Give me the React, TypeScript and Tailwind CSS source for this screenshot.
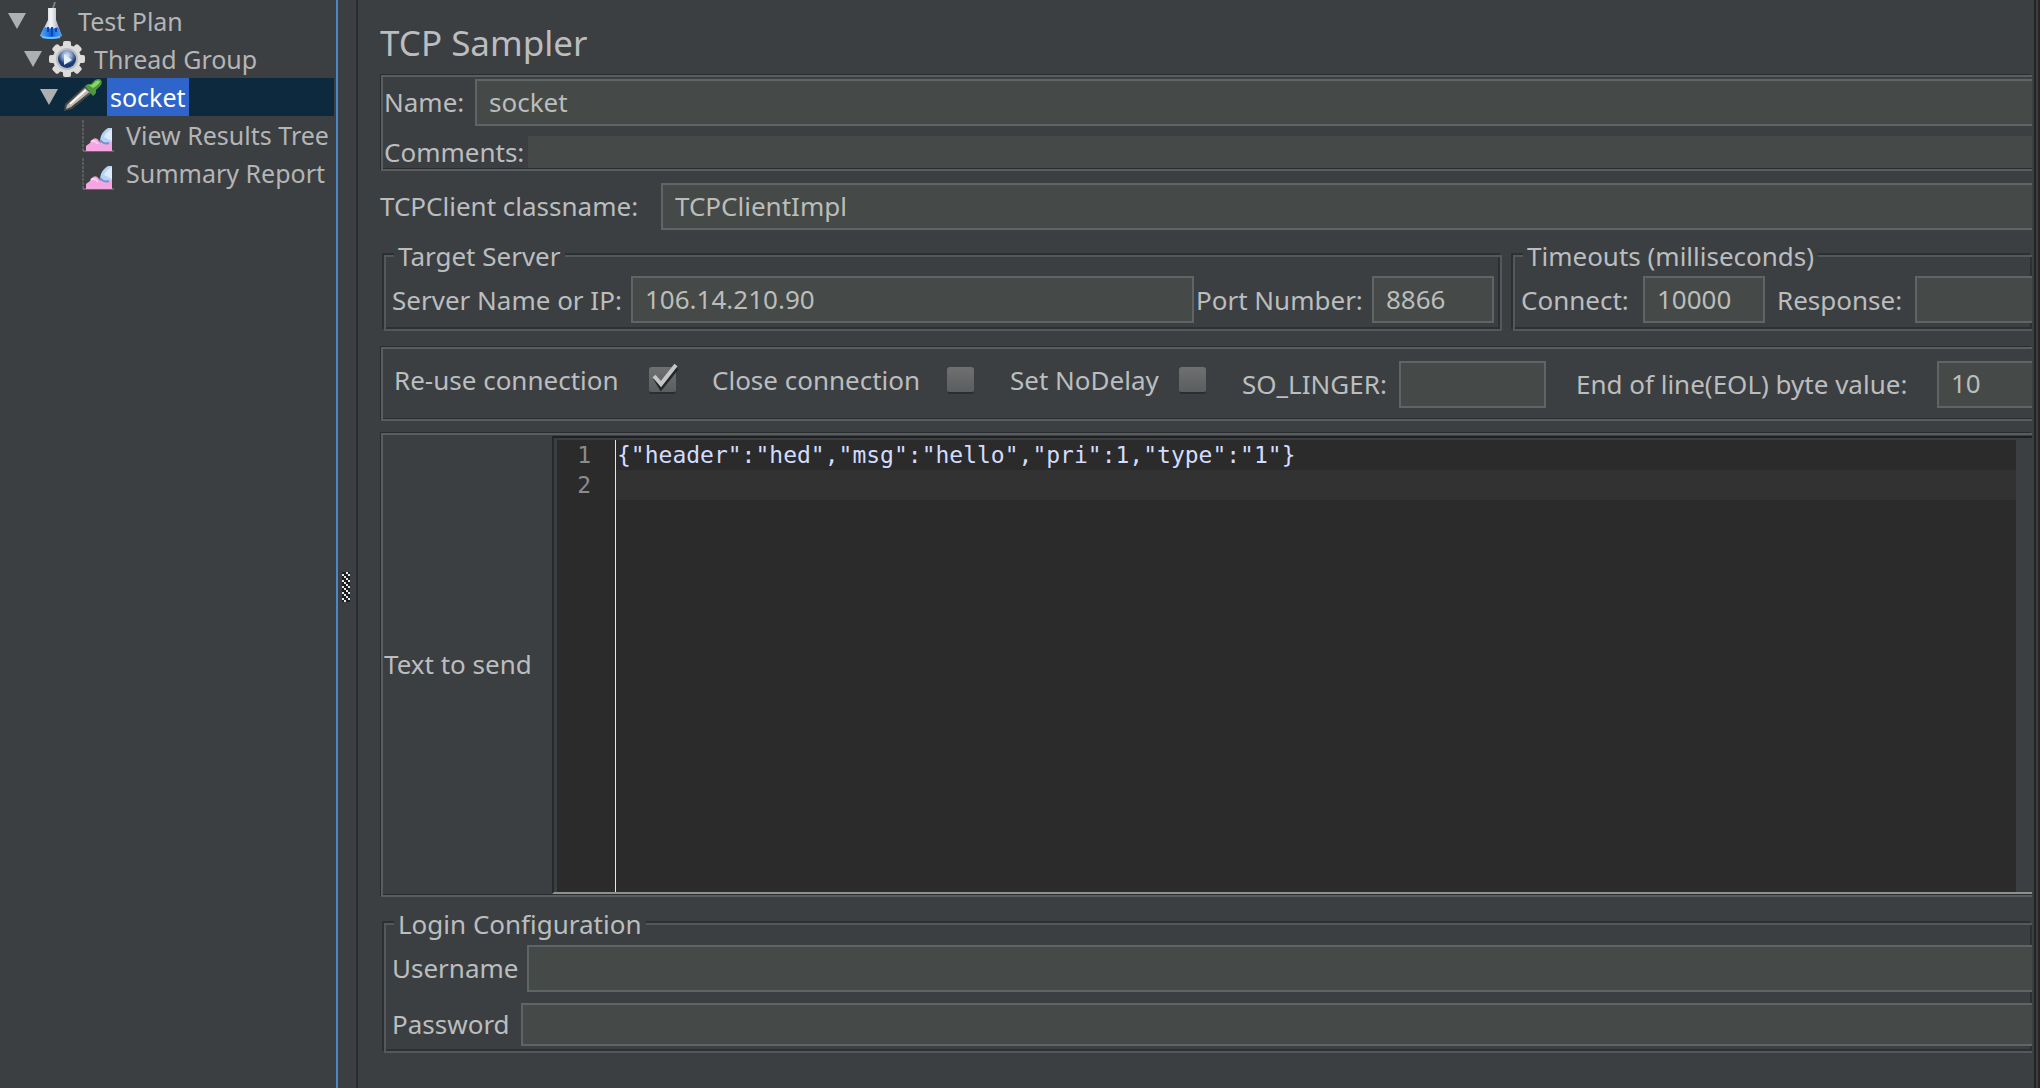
import React, { useState } from 'react';

interface TreeNode {
    label: string;
    icon: React.ReactNode;
    indent: string;
    expandable: boolean;
}

const FlaskIcon = () => (
    <svg width="40" height="38" viewBox="0 0 40 38">
        <defs>
            <linearGradient id="glass" x1="0" x2="1">
                <stop offset="0" stopColor="#9aa5ad" />
                <stop offset="0.5" stopColor="#f4f6f8" />
                <stop offset="1" stopColor="#8d979e" />
            </linearGradient>
            <linearGradient id="liquid" x1="0" x2="1">
                <stop offset="0" stopColor="#55b1ff" />
                <stop offset="0.5" stopColor="#1460d8" />
                <stop offset="1" stopColor="#4aa6f8" />
            </linearGradient>
        </defs>
        <path d="M22 6L24 0" stroke="#7c7f80" strokeWidth="2" />
        <path d="M17 6h8v12l6 16q-11 4-22 0l8-16z" fill="url(#glass)" />
        <path d="M13 25q8 3 14 0l4 9q-11 5-22 0z" fill="url(#liquid)" />
        <path d="M17 25v5M21 25v9M25 26v4" stroke="#0c46b4" strokeWidth="2" />
        <path d="M11 35q9 2 18 0" stroke="#6cc4ff" strokeWidth="2" fill="none" />
    </svg>
);

const GearIcon = () => (
    <svg width="40" height="38" viewBox="0 0 40 38">
        <defs>
            <radialGradient id="hub" cy="0.3">
                <stop offset="0" stopColor="#dfe5ee" />
                <stop offset="0.5" stopColor="#8ba6cf" />
                <stop offset="1" stopColor="#1b3a75" />
            </radialGradient>
        </defs>
        <g fill="#dcdcda">
            {[0, 45, 90, 135].map((angle) => (
                <rect key={angle} x="16" y="1" width="8" height="36" rx="2" transform={`rotate(${angle} 20 19)`} />
            ))}
            <circle cx="20" cy="19" r="14" />
        </g>
        <circle cx="20" cy="19" r="11" fill="#b9bcc0" />
        <circle cx="20" cy="19" r="9" fill="url(#hub)" />
        <path d="M17 14l8 6-8 5z" fill="#e6f0fc" />
    </svg>
);

const DropperIcon = () => (
    <svg width="40" height="38" viewBox="0 0 40 38">
        <path d="M1 33l1-7L22 8l7 7L9 31z" fill="#4a4843" />
        <path d="M3 31l1-4L22 10l5 5L8 29z" fill="#bab8b0" />
        <path d="M7 26L23 12" stroke="#f6f6f4" strokeWidth="2" />
        <path d="M9 29l17-14" stroke="#3a3935" strokeWidth="1" />
        <path d="M22 8l3-2h3l4-4q4-2 6 0 2 3-1 6l-4 4v3l-3 3z" fill="#4d9a3b" />
        <path d="M26 7h3l4-4q3-1 4 0 0 3-7 7z" fill="#8bd56b" />
    </svg>
);

const ListenerIcon = () => (
    <svg width="40" height="38" viewBox="0 0 40 38">
        <path d="M4 4v31" stroke="#77797a" strokeWidth="1" strokeDasharray="3 1" />
        <path d="M4 35h31" stroke="#8b8e90" strokeWidth="1" />
        <path d="M21 24q1-8 8-12h4v23H24z" fill="#b4d4f5" />
        <path d="M25 21q2-5 8-8v12z" fill="#dcecfd" />
        <path d="M7 35v-5q4-2 7-7 4-2 6 2 4 5 8 3 3-2 5-2v9z" fill="#f3a6e0" />
        <path d="M21 24q4 5 9 3" stroke="#7d8fd0" strokeWidth="2" fill="none" />
        <path d="M12 26q3-3 7 2" stroke="#fbd0f1" strokeWidth="2" fill="none" />
    </svg>
);

const nodes: TreeNode[] = [
    { label: 'Test Plan', icon: <FlaskIcon />, indent: 'pl-2', expandable: true },
    { label: 'Thread Group', icon: <GearIcon />, indent: 'pl-6', expandable: true },
    { label: 'socket', icon: <DropperIcon />, indent: 'pl-10', expandable: true },
    { label: 'View Results Tree', icon: <ListenerIcon />, indent: 'pl-14', expandable: false },
    { label: 'Summary Report', icon: <ListenerIcon />, indent: 'pl-14', expandable: false },
];

const inputBase = 'min-w-0 border-2 border-[#5f6465] bg-[#454947] px-3 text-[#bbbdbb] outline-none';
const input = `${inputBase} h-[47px] pb-0.5`;
const openInput = `${input} flex-1 border-r-0`;
const panel = 'border-y-2 border-l-2 border-[#5a5d5f] shadow-[-1px_-1px_0_#2a2d2f,inset_0_-1px_0_#2a2d2f]';
const group = 'min-w-0 border-2 border-[#55585a] shadow-[-2px_-2px_0_#2d3032,inset_-2px_-2px_0_#2d3032]';
const legend = 'ml-0.5 bg-[#3c3f41] px-1 leading-8';

const Checkbox: React.FC<{ label: string; width: string; initial?: boolean }> = ({ label, width, initial = false }) => {
    const [checked, setChecked] = useState<boolean>(initial);

    return (
        <label className={`flex items-center justify-between whitespace-nowrap ${width}`}>
            {label}
            <span className="relative size-[27px]">
                <input
                    type="checkbox"
                    checked={checked}
                    onChange={(e) => setChecked(e.target.checked)}
                    className="block size-[27px] appearance-none rounded-[3px] border-b-2 border-[#2b2d2f] bg-linear-to-b from-[#6f7070] to-[#5c5d5e]"
                />
                {checked && (
                    <svg className="pointer-events-none absolute -top-1 left-0" width="32" height="32" viewBox="0 0 32 32" fill="none">
                        <path d="M6 15l6 10L28 5" stroke="#252628" strokeWidth="4" />
                        <path d="M5 13l7 8L27 2" stroke="#c4c6c8" strokeWidth="4" />
                    </svg>
                )}
            </span>
        </label>
    );
};

const App: React.FC = () => {
    const [selected, setSelected] = useState<string>('socket');
    const [text, setText] = useState<string>('{"header":"hed","msg":"hello","pri":1,"type":"1"}\n');

    return (
        <div className="flex min-h-screen bg-[#3c3f41] font-['Noto_Sans',sans-serif] text-[26px] leading-8 text-[#bbbdbf]">
            <nav className="w-[336px] shrink-0 pt-0.5 pr-0.5">
                {nodes.map((node) => (
                    <button
                        key={node.label}
                        type="button"
                        onClick={() => setSelected(node.label)}
                        className={`flex h-[38px] w-full items-center text-[25px] ${node.indent} ${selected === node.label ? 'bg-[#0d293e]' : ''}`}
                    >
                        <svg className="mr-[5px] shrink-0" width="18" height="18" viewBox="0 0 18 18">
                            {node.expandable && <path d="M0 1h18L9 17z" fill="#adafb0" />}
                        </svg>
                        <span className="mr-1 shrink-0">{node.icon}</span>
                        <span
                            className={`px-[3px] leading-[38px] whitespace-nowrap ${
                                selected === node.label ? 'bg-[#2f65ca] text-white' : 'text-[#b4b5b6]'
                            }`}
                        >
                            {node.label}
                        </span>
                    </button>
                ))}
            </nav>

            <div className="flex w-[22px] shrink-0 items-center border-r-2 border-l-2 border-r-[#2a2c2e] border-l-[#4a88c7] pt-[86px] pl-1">
                <svg width="8" height="30" viewBox="0 0 8 30">
                    {[0, 6, 12, 18, 24].map((y) => (
                        <g key={y}>
                            <rect y={y} width="8" height="6" fill="#1d1e1f" />
                            <path d={`M0 ${y + 2}h2v2h-2zM2 ${y + 4}h2v2h-2zM4 ${y}h2v2h-2zM6 ${y + 2}h2v2h-2z`} fill="#e8e8e8" />
                        </g>
                    ))}
                </svg>
            </div>

            <main className="min-w-0 flex-1 overflow-hidden pt-[23px] pl-[22px]">
                <h1 className="mb-3 text-[35px] leading-10">TCP Sampler</h1>

                <section className={`${panel} ml-px pt-0.5`}>
                    <div className="flex items-center">
                        <label htmlFor="name" className="w-[92px] pb-0.5 pl-px">Name:</label>
                        <input id="name" defaultValue="socket" className={openInput} />
                    </div>
                    <div className="mt-2.5 flex h-[33px] items-center pb-px">
                        <label htmlFor="comments" className="w-[145px] pl-px">Comments:</label>
                        <input id="comments" className="h-8 min-w-0 flex-1 bg-[#454947] outline-none" />
                    </div>
                </section>

                <div className="mt-3 flex items-center">
                    <label htmlFor="classname" className="w-[281px] pb-0.5 whitespace-nowrap">TCPClient classname:</label>
                    <input id="classname" defaultValue="TCPClientImpl" className={openInput} />
                </div>

                <div className="mt-[10px] flex gap-[11px] pl-1">
                    <fieldset className={`${group} flex-1 pb-1.5 pl-1.5`}>
                        <legend className={legend}>Target Server</legend>
                        <div className="flex items-center pt-1 pr-1.5">
                            <label htmlFor="server" className="w-[239px] whitespace-nowrap">Server Name or IP:</label>
                            <input id="server" defaultValue="106.14.210.90" className={`${input} flex-1`} />
                            <label htmlFor="port" className="w-[178px] pl-0.5 whitespace-nowrap">Port Number:</label>
                            <input id="port" defaultValue="8866" className={`${input} w-[122px]`} />
                        </div>
                    </fieldset>
                    <fieldset className={`${group} w-[519px] border-r-0 pb-1.5 pl-1.5`}>
                        <legend className={legend}>Timeouts (milliseconds)</legend>
                        <div className="flex items-center pt-1">
                            <label htmlFor="connect" className="w-[122px]">Connect:</label>
                            <input id="connect" defaultValue="10000" className={`${input} w-[122px]`} />
                            <label htmlFor="response" className="w-[150px] pl-3">Response:</label>
                            <input id="response" className={openInput} />
                        </div>
                    </fieldset>
                </div>

                <section className={`${panel} mt-4 ml-px flex h-[74px] items-center pl-[11px]`}>
                    <div className="flex gap-9 pb-2">
                        <Checkbox label="Re-use connection" width="w-[282px]" initial />
                        <Checkbox label="Close connection" width="w-[262px]" />
                        <Checkbox label="Set NoDelay" width="w-[196px]" />
                    </div>
                    <label htmlFor="linger" className="ml-9 w-[157px]">SO_LINGER:</label>
                    <input id="linger" className={`${input} w-[147px]`} />
                    <label htmlFor="eol" className="ml-[30px] w-[361px] whitespace-nowrap">End of line(EOL) byte value:</label>
                    <input id="eol" defaultValue="10" className={openInput} />
                </section>

                <section className={`${panel} mt-3 ml-px flex h-[464px]`}>
                    <label htmlFor="payload" className="w-[169px] self-center pb-0.5 pl-px whitespace-nowrap">Text to send</label>
                    <div className="mt-px mb-px flex flex-1 border-t-2 border-b-2 border-l-2 border-t-[#1f2021] border-b-[#8f918c] border-l-[#26292b] bg-[#3c3f41] pt-0.5 pr-4 pl-[3px] font-['DejaVu_Sans_Mono',monospace] text-[23px] leading-[30px]">
                        <div className="w-[58px] bg-[#2b2b2b] pr-6 text-right text-[#8a8c8e]">
                            <div>1</div>
                            <div>2</div>
                        </div>
                        <textarea
                            id="payload"
                            value={text}
                            spellCheck={false}
                            onChange={(e) => setText(e.target.value)}
                            className="min-w-0 flex-1 resize-none border-l border-[#e6e6e6] bg-[#2b2b2b] bg-[linear-gradient(#323232,#323232)] bg-[length:100%_30px] bg-[position:0_30px] bg-no-repeat pl-px text-[#d3dcff] outline-none"
                        />
                    </div>
                </section>

                <fieldset className={`${group} mt-[11px] ml-1 border-r-0 pb-[5px] pl-1.5`}>
                    <legend className={legend}>Login Configuration</legend>
                    <div className="flex items-center pt-[5px]">
                        <label htmlFor="username" className="w-[135px] pb-0.5">Username</label>
                        <input id="username" className={openInput} />
                    </div>
                    <div className="mt-[11px] flex items-center">
                        <label htmlFor="password" className="w-[129px] pb-0.5">Password</label>
                        <input id="password" type="password" className={`${inputBase} h-[43px] flex-1 border-r-0`} />
                    </div>
                </fieldset>
            </main>

            <div className="ml-0.5 w-1.5 shrink-0 border-r-2 border-l-2 border-r-[#2a2425] border-l-[#222526]" />
        </div>
    );
};

export default App;
